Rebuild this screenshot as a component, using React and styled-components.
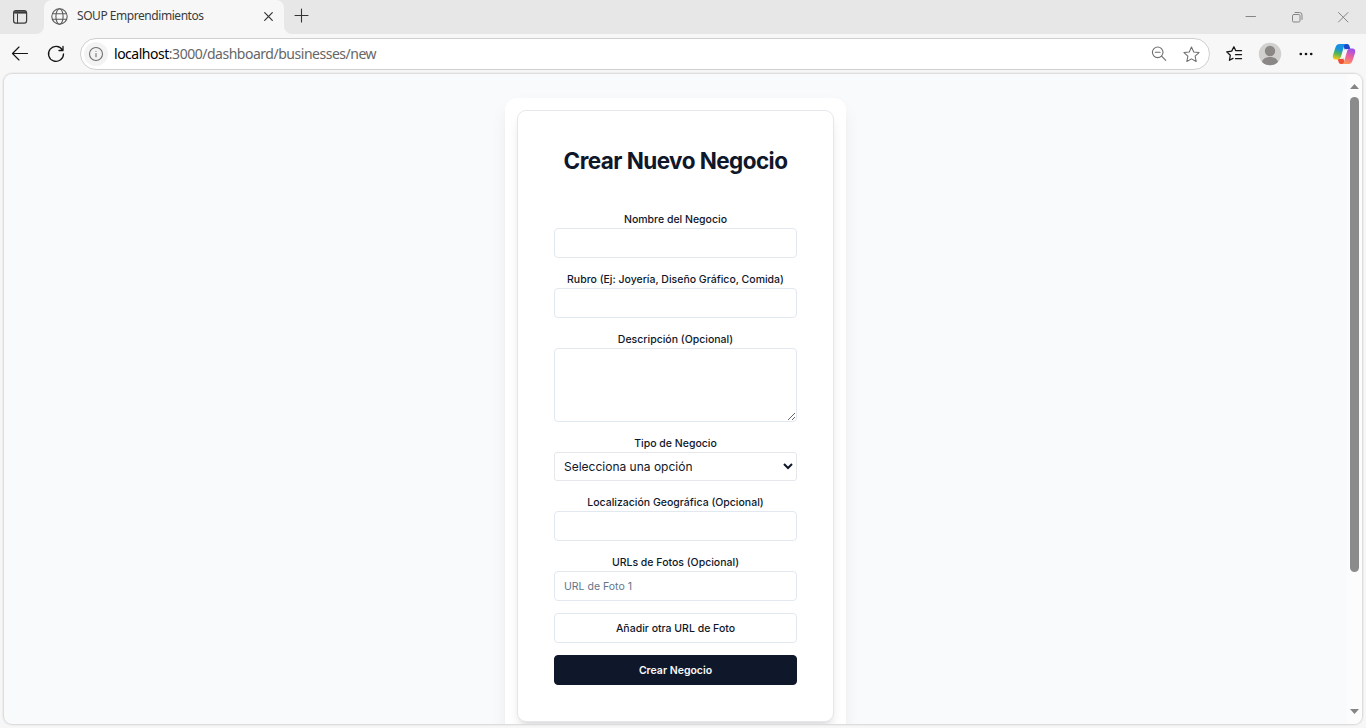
import React from 'react';
import styled, { createGlobalStyle } from 'styled-components';

const Global = createGlobalStyle`
  *, *::before, *::after { box-sizing: border-box; }
  html, body { margin: 0; padding: 0; overflow: hidden; }
  body { font-family: Inter, "Liberation Sans", sans-serif; color: #0f172a; }
`;

const Window = styled.div`
  width: 1366px;
  height: 728px;
  display: flex;
  flex-direction: column;
  background: #f7f7f7;
  overflow: hidden;
`;

const chromeFont = `"Noto Sans", "Open Sans", sans-serif`;

const TabStrip = styled.div`
  flex: none;
  height: 34px;
  display: flex;
  background: #f7f7f7;
`;

const StripStart = styled.div`
  width: 44px;
  height: 34px;
  padding: 9px 0 0 13px;
  background: #e7e7e7;
  border-bottom-right-radius: 8px;
`;

const TabBack = styled.div`
  width: 240px;
  background: #e7e7e7;
`;

const Tab = styled.div`
  height: 34px;
  display: flex;
  align-items: center;
  padding: 0 10px 2px 7px;
  background: #f7f7f7;
  border-radius: 8px 8px 0 0;
`;

const TabTitle = styled.span`
  margin-left: 9px;
  flex: 1;
  font: 400 12px/16px ${chromeFont};
  letter-spacing: -0.45px;
  color: #3b3b3b;
  white-space: nowrap;
`;

const StripEnd = styled.div`
  flex: 1;
  display: flex;
  justify-content: space-between;
  padding: 8px 17px 0 10px;
  background: #e7e7e7;
  border-bottom-left-radius: 8px;
`;

const WindowControls = styled.div`
  display: flex;
  gap: 34px;
  padding-top: 3px;
`;

const Toolbar = styled.div`
  flex: none;
  height: 40px;
  display: flex;
  align-items: center;
  padding: 0 10px 0 10px;
`;

const ToolGlyph = styled.span`
  display: flex;
  flex: none;
  margin-left: ${(p) => p.$gap || 0}px;
`;

const AddressBar = styled.div`
  flex: none;
  width: 1130px;
  height: 32px;
  margin-left: 14px;
  display: flex;
  align-items: center;
  padding: 0 9px 0 4px;
  border: 1px solid #cfcfcf;
  border-radius: 16px;
  background: #fff;
`;

const InfoBadge = styled.span`
  width: 24px;
  height: 24px;
  display: flex;
  align-items: center;
  justify-content: center;
  margin-left: -1px;
  border-radius: 50%;
  background: #f3f3f3;
`;

const Url = styled.span`
  flex: 1;
  margin-left: 6px;
  font: 400 14px/20px ${chromeFont};
  letter-spacing: -0.48px;
  color: #666;
  white-space: nowrap;
`;

const Host = styled.span`
  color: #000;
`;

const Viewport = styled.div`
  flex: none;
  height: 650px;
  margin: 0 4px;
  display: flex;
  overflow: hidden;
  border-radius: 8px;
  background: #f8fafc;
  box-shadow: 0 0 2px 1px rgba(0, 0, 0, 0.14);
`;

const Page = styled.main`
  flex: 1;
  display: flex;
  justify-content: center;
  align-items: flex-start;
  padding-top: 24px;
`;

const Panel = styled.div`
  width: 341px;
  height: 660px;
  padding: 12px;
  border-radius: 12px;
  background: #fff;
  box-shadow: 0 8px 19px -4px rgba(0, 0, 0, 0.09), 0 3px 5px -3px rgba(0, 0, 0, 0.06);
`;

const Card = styled.form`
  display: flex;
  flex-direction: column;
  gap: 12px;
  padding: 36px;
  border: 1px solid #e5e7eb;
  border-radius: 9px;
  background: #fff;
  box-shadow: 0 8px 12px -2px rgba(0, 0, 0, 0.1), 0 3px 5px -3px rgba(0, 0, 0, 0.1);
`;

const Heading = styled.h1`
  margin: 0 0 24px;
  font-size: 22.5px;
  line-height: 27px;
  font-weight: 700;
  letter-spacing: -0.5625px;
  text-align: center;
  white-space: nowrap;
`;

const Field = styled.label`
  display: flex;
  flex-direction: column;
`;

const LabelText = styled.span`
  height: 18px;
  font-size: 10.5px;
  line-height: 20px;
  font-weight: 500;
  text-align: center;
  white-space: nowrap;
`;

const Input = styled.input`
  width: 100%;
  height: 30px;
  padding: 0 9px;
  border: 1px solid #e2e8f0;
  border-radius: 4px;
  background: #fff;
  font: 400 10.5px/15px Inter, sans-serif;
  outline: none;
  &::placeholder { color: #64748b; opacity: 1; }
`;

const TextArea = styled.textarea`
  display: block;
  width: 100%;
  height: 74px;
  padding: 6px 9px;
  border: 1px solid #e2e8f0;
  border-radius: 4px;
  background: #fff;
  resize: vertical;
  outline: none;
`;

const Select = styled.select`
  width: 100%;
  height: 29px;
  padding: 0 4px 1px 5px;
  border: 1px solid #e5e7eb;
  border-radius: 3px;
  background: #fff;
  color: #0f172a;
  font: 400 12px/18px Inter, sans-serif;
`;

const Button = styled.button`
  height: 30px;
  padding: 0;
  border: 1px solid ${(p) => (p.$primary ? '#0f172a' : '#e2e8f0')};
  border-radius: 4px;
  background: ${(p) => (p.$primary ? '#0f172a' : '#fff')};
  color: ${(p) => (p.$primary ? '#f8fafc' : '#0f172a')};
  font: ${(p) => (p.$primary ? 600 : 500)} 10.5px/15px Inter, sans-serif;
`;

const ScrollRail = styled.div`
  width: 15px;
  display: flex;
  flex-direction: column;
  align-items: center;
  padding: 10px 0 10px;
  background: #fcfcfc;
`;

const Thumb = styled.div`
  width: 9px;
  height: 475px;
  margin: 7px 0 auto;
  border-radius: 5px;
  background: #8b8b8b;
`;

const Icon = ({ size = 16, box = size, color = '#333', width = 1, children }) => (
  <svg width={size} height={size} viewBox={`0 0 ${box} ${box}`} fill="none" stroke={color}
    strokeWidth={width} strokeLinecap="round" strokeLinejoin="round">{children}</svg>
);

const CopilotLogo = () => (
  <svg width="24" height="24" viewBox="0 0 24 24">
    <defs>
      <linearGradient id="cool" x1=".6" y1="0" x2=".35" y2="1">
        <stop offset="0" stopColor="#1b8fe8" />
        <stop offset=".35" stopColor="#1596d8" />
        <stop offset=".65" stopColor="#54b657" />
        <stop offset="1" stopColor="#f5c613" />
      </linearGradient>
      <linearGradient id="warm" x1=".65" y1="0" x2=".3" y2="1">
        <stop offset="0" stopColor="#9a50f0" />
        <stop offset=".5" stopColor="#ee609d" />
        <stop offset="1" stopColor="#ff9a55" />
      </linearGradient>
    </defs>
    <path d="M11 2h4c1.600 0 2.200 1 2.600 2.400l.7 2.600h-2.200c-1.600 0-2.400.6-3 2z" fill="#1c49cc" />
    <path d="M13 22H9c-1.600 0-2.200-1-2.600-2.400L5.700 17h2.200c1.600 0 2.400-.6 3-2z" fill="#ee5136" />
    <path d="M7.400 2h6.800c-1.300 0-1.900 1-2.300 2.400L9 14.600C8.400 16.600 7.600 17.500 5.900 17.500H3.800c-2.700 0-3.500-2-2.800-4.500L3.600 5C4.300 3 5.500 2 7.400 2z" fill="url(#cool)" />
    <path d="M16.600 22H9.800c1.300 0 1.900-1 2.300-2.400L15 9.400c.6-2 1.400-2.900 3.100-2.900h2.100c2.700 0 3.500 2 2.800 4.500L20.400 19c-.7 2-1.900 3-3.800 3z" fill="url(#warm)" />
    <path d="M13.600 8.200L10.400 15.800" stroke="#f7f7f7" strokeWidth="2.200" strokeLinecap="round" />
  </svg>
);

const TextField = ({ label, children, ...rest }) => (
  <Field>
    <LabelText>{label}</LabelText>
    {children || <Input type="text" {...rest} />}
  </Field>
);

const STAR = 'M8 1l2.100 4.600 5 .6-3.700 3.400 1 5L8 12.100l-4.400 2.500 1-5L.9 6.200l5-.6z';

export default function App() {
  return (
    <Window>
      <Global />
      <TabStrip>
        <StripStart>
          <Icon size={15} color="#3b3b3b" width={1.2}>
            <rect x=".6" y=".6" width="13" height="12.500" rx="2.300" />
            <path d="M1.200 2.400h11.800" strokeWidth="2.400" strokeLinecap="butt" />
            <path d="M4.500 4v9" strokeWidth="1" />
          </Icon>
        </StripStart>
        <TabBack>
          <Tab>
            <Icon size={17} color="#5c5c5c" width={1.1}>
              <circle cx="8.500" cy="8.500" r="7.700" />
              <ellipse cx="8.500" cy="8.500" rx="3.600" ry="7.700" />
              <path d="M1.500 5.800h14M1.500 11.200h14" />
            </Icon>
            <TabTitle>SOUP Emprendimientos</TabTitle>
            <Icon size={11} color="#333" width={1.2}><path d="M1.700 1.700l7.600 7.600M9.300 1.700l-7.600 7.600" /></Icon>
          </Tab>
        </TabBack>
        <StripEnd>
          <Icon size={16} color="#333" width={1.1}><path d="M7.500 1v13M1 7.500h13" /></Icon>
          <WindowControls>
            <Icon size={12} color="#858585"><path d="M1 5.500h9.500" /></Icon>
            <Icon size={12} color="#858585">
              <rect x="1.500" y="3.500" width="7.500" height="7.500" rx="1.200" />
              <path d="M4 1.500h4.500a2.500 2.500 0 0 1 2.500 2.500v4.500" />
            </Icon>
            <Icon size={12} color="#858585"><path d="M1.500 1.500l9.500 9.500M11 1.500l-9.500 9.500" /></Icon>
          </WindowControls>
        </StripEnd>
      </TabStrip>
      <Toolbar>
        <ToolGlyph>
          <Icon size={20} color="#151515" width={1.15}><path d="M2.500 9.500h15M9 3L2.500 9.500 9 16" /></Icon>
        </ToolGlyph>
        <ToolGlyph $gap={16}>
          <Icon size={20} color="#151515" width={1.3}>
            <path d="M16.400 6A7.500 7.500 0 1 0 17.500 10M17 2.500v4h-4" />
          </Icon>
        </ToolGlyph>
        <AddressBar>
          <InfoBadge>
            <Icon size={16} color="#707070" width={1.1}>
              <circle cx="8" cy="8" r="6.500" /><path d="M8 7.500v3.300M8 5.200v.1" />
            </Icon>
          </InfoBadge>
          <Url><Host>localhost</Host>:3000/dashboard/businesses/new</Url>
          <ToolGlyph>
            <Icon size={16} color="#6e6e6e" width={1.1}>
              <circle cx="6.700" cy="6.300" r="5.300" /><path d="M10.600 10.200l4.100 4.200M4.300 6.300h4.800" />
            </Icon>
          </ToolGlyph>
          <ToolGlyph $gap={16}>
            <Icon size={17} box={16} color="#6e6e6e" width={1}><path d={STAR} /></Icon>
          </ToolGlyph>
        </AddressBar>
        <ToolGlyph $gap={15}>
          <Icon size={18} color="#151515" width={1.25}>
            <path d="M10.800 5.700L8.900 1.700 6.700 6.100l-5 .7 3.600 3.500-.9 5L8 13.400M10.800 5.700h5.700M10.500 9.700h6M10.500 13.700h6" />
          </Icon>
        </ToolGlyph>
        <ToolGlyph $gap={15}>
          <svg width="24" height="24" viewBox="0 0 24 24">
            <clipPath id="avatar"><circle cx="12" cy="12" r="11.200" /></clipPath>
            <circle cx="12" cy="12" r="11.200" fill="#d2d0ce" />
            <g clipPath="url(#avatar)" fill="#8a8785">
              <circle cx="12" cy="9" r="5.200" />
              <path d="M3.800 21.500c0-4.500 4-6.500 8.200-6.500s8.200 2 8.200 6.500V24H3.800z" />
            </g>
          </svg>
        </ToolGlyph>
        <ToolGlyph $gap={16}>
          <svg width="16" height="16" viewBox="0 0 16 16" fill="#151515">
            <circle cx="2.800" cy="8" r="1.350" /><circle cx="8" cy="8" r="1.350" /><circle cx="13.200" cy="8" r="1.350" />
          </svg>
        </ToolGlyph>
        <ToolGlyph $gap={18}><CopilotLogo /></ToolGlyph>
      </Toolbar>
      <Viewport>
        <Page>
          <Panel>
            <Card>
              <Heading>Crear Nuevo Negocio</Heading>
              <TextField label="Nombre del Negocio" />
              <TextField label="Rubro (Ej: Joyería, Diseño Gráfico, Comida)" />
              <TextField label="Descripción (Opcional)"><TextArea /></TextField>
              <TextField label="Tipo de Negocio">
                <Select defaultValue=""><option value="">Selecciona una opción</option></Select>
              </TextField>
              <TextField label="Localización Geográfica (Opcional)" />
              <TextField label="URLs de Fotos (Opcional)" placeholder="URL de Foto 1" />
              <Button type="button">Añadir otra URL de Foto</Button>
              <Button type="button" $primary>Crear Negocio</Button>
            </Card>
          </Panel>
        </Page>
        <ScrollRail>
          <svg width="9" height="6" viewBox="0 0 9 6"><path d="M4.500 0L9 5H0z" fill="#858585" /></svg>
          <Thumb />
          <svg width="9" height="5" viewBox="0 0 9 5"><path d="M0 0h9L4.500 5z" fill="#858585" /></svg>
        </ScrollRail>
      </Viewport>
    </Window>
  );
}
